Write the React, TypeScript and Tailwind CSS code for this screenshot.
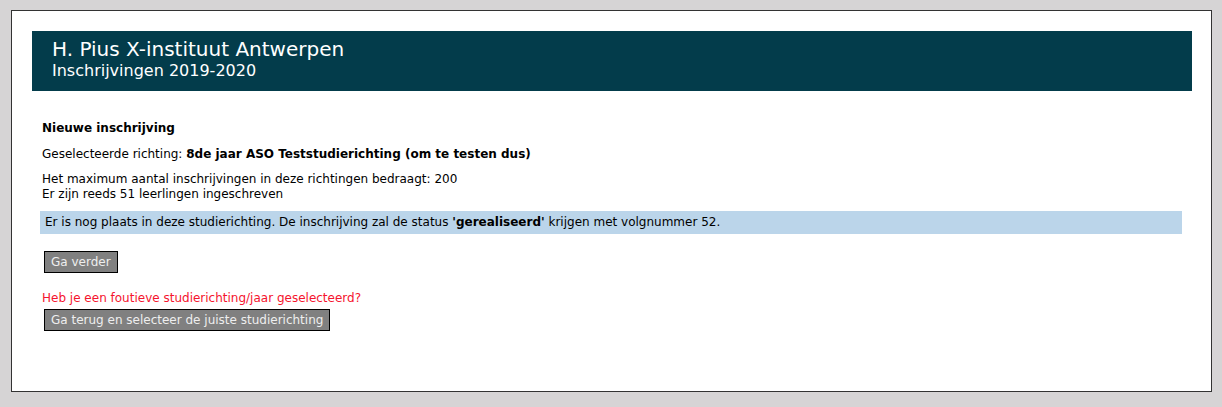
export default function App() {
  return (
    <div className="min-h-[407px] bg-[#d6d4d5] pt-[10px] pl-[11px] pr-[10px] pb-[15px] font-['DejaVu_Sans',Verdana,sans-serif]">
      <div className="h-[382px] border border-[#333] bg-white pl-[20px] pr-[19px] pt-[20px]">
        <div className="h-[60px] bg-[#033c4b] pl-[20px] pt-[6px] text-white">
          <div className="text-[20px] leading-[24px]">H. Pius X-instituut Antwerpen</div>
          <div className="text-[16px] leading-[20px]">Inschrijvingen 2019-2020</div>
        </div>
        <div className="ml-[8px] mr-[10px] pt-[30px] text-[12px] leading-[15px] text-black">
          <p className="pl-[2px] font-bold">Nieuwe inschrijving</p>
          <p className="mt-[11px] pl-[2px]">
            Geselecteerde richting: <b>8de jaar ASO Teststudierichting (om te testen dus)</b>
          </p>
          <p className="mt-[10px] pl-[2px]">
            Het maximum aantal inschrijvingen in deze richtingen bedraagt: 200
            <br />
            Er zijn reeds 51 leerlingen ingeschreven
          </p>
          <div className="mt-[9px] h-[23px] bg-[#bbd5ea] pl-[5px] pt-[4px]">
            Er is nog plaats in deze studierichting. De inschrijving zal de status <b>'gerealiseerd'</b> krijgen met volgnummer 52.
          </div>
          <div className="mt-[17px] pl-[4px]">
            <button className="h-[22px] border border-black bg-[#808080] px-[6px] text-[12px] text-[#eee]">Ga verder</button>
          </div>
          <p className="mt-[18px] pl-[2px] text-[#f5142e]">Heb je een foutieve studierichting/jaar geselecteerd?</p>
          <div className="mt-[3px] pl-[4px]">
            <button className="h-[22px] border border-black bg-[#808080] px-[6px] text-[12px] text-[#eee]">
              Ga terug en selecteer de juiste studierichting
            </button>
          </div>
        </div>
      </div>
    </div>
  );
}
